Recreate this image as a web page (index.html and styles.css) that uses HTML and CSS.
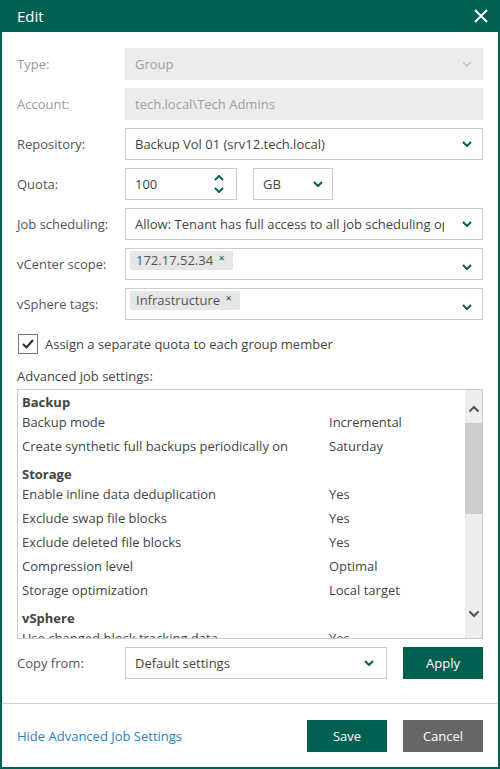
FILE: index.html
```html
<!DOCTYPE html>
<html lang="en">
<head>
  <meta charset="UTF-8">
  <title>Edit</title>
  <link rel="stylesheet" href="styles.css">
</head>
<body>

<div class="dialog">
  <header class="dlg-head">
    <h1>Edit</h1>
    <span class="close">
      <svg width="14" height="14" viewBox="0 0 14 14"><path d="M1 1L13 13M13 1L1 13" stroke="#fff" stroke-width="2"/></svg>
    </span>
  </header>

  <div class="dlg-body">
    <div class="row">
      <span class="label disabled">Type:</span>
      <div class="field off">
        <span class="val">Group</span>
        <svg class="chev" width="10" height="6" viewBox="0 0 10 6"><path d="M1 1L5 5L9 1" stroke="#c4c4c4" stroke-width="1.6" fill="none"/></svg>
      </div>
    </div>
    <div class="row">
      <span class="label disabled">Account:</span>
      <div class="field off"><span class="val">tech.local\Tech Admins</span></div>
    </div>
    <div class="row">
      <span class="label">Repository:</span>
      <div class="field">
        <span class="val">Backup Vol 01 (srv12.tech.local)</span>
        <svg class="chev" width="10" height="6" viewBox="0 0 10 6"><path d="M1 1L5 5L9 1" stroke="#006150" stroke-width="2" fill="none"/></svg>
      </div>
    </div>
    <div class="row">
      <span class="label">Quota:</span>
      <div class="field quota">
        <span class="val">100</span>
        <span class="spin">
          <svg width="10" height="6" viewBox="0 0 10 6"><path d="M1 5L5 1L9 5" stroke="#006150" stroke-width="2" fill="none"/></svg>
          <svg width="10" height="6" viewBox="0 0 10 6"><path d="M1 1L5 5L9 1" stroke="#006150" stroke-width="2" fill="none"/></svg>
        </span>
      </div>
      <div class="field unit">
        <span class="val">GB</span>
        <svg class="chev" width="10" height="6" viewBox="0 0 10 6"><path d="M1 1L5 5L9 1" stroke="#006150" stroke-width="2" fill="none"/></svg>
      </div>
    </div>
    <div class="row">
      <span class="label">Job scheduling:</span>
      <div class="field">
        <span class="val clip">Allow: Tenant has full access to all job scheduling options</span>
        <svg class="chev" width="10" height="6" viewBox="0 0 10 6"><path d="M1 1L5 5L9 1" stroke="#006150" stroke-width="2" fill="none"/></svg>
      </div>
    </div>
    <div class="row">
      <span class="label">vCenter scope:</span>
      <div class="field tags">
        <span class="tag">172.17.52.34 <b>&times;</b></span>
        <svg class="chev" width="10" height="6" viewBox="0 0 10 6"><path d="M1 1L5 5L9 1" stroke="#006150" stroke-width="2" fill="none"/></svg>
      </div>
    </div>
    <div class="row">
      <span class="label">vSphere tags:</span>
      <div class="field tags">
        <span class="tag">Infrastructure <b>&times;</b></span>
        <svg class="chev" width="10" height="6" viewBox="0 0 10 6"><path d="M1 1L5 5L9 1" stroke="#006150" stroke-width="2" fill="none"/></svg>
      </div>
    </div>

    <label class="check">
      <span class="box">
        <svg width="14" height="12" viewBox="0 0 14 12"><path d="M2 6L5.5 9.5L12 2" stroke="#333" stroke-width="2.2" fill="none"/></svg>
      </span>
      Assign a separate quota to each group member
    </label>

    <div class="adv-title">Advanced job settings:</div>

    <div class="adv">
      <div class="adv-list">
        <div class="grp">Backup</div>
        <div class="item"><span>Backup mode</span><span>Incremental</span></div>
        <div class="item"><span>Create synthetic full backups periodically on</span><span>Saturday</span></div>
        <div class="grp">Storage</div>
        <div class="item"><span>Enable inline data deduplication</span><span>Yes</span></div>
        <div class="item"><span>Exclude swap file blocks</span><span>Yes</span></div>
        <div class="item"><span>Exclude deleted file blocks</span><span>Yes</span></div>
        <div class="item"><span>Compression level</span><span>Optimal</span></div>
        <div class="item"><span>Storage optimization</span><span>Local target</span></div>
        <div class="grp">vSphere</div>
        <div class="item"><span>Use changed block tracking data</span><span>Yes</span></div>
      </div>
      <div class="scrollbar">
        <svg width="12" height="8" viewBox="0 0 12 8"><path d="M1.5 6.5L6 2L10.5 6.5" stroke="#555" stroke-width="2.2" fill="none"/></svg>
        <div class="track"><div class="thumb"></div></div>
        <svg width="12" height="8" viewBox="0 0 12 8"><path d="M1.5 1.5L6 6L10.5 1.5" stroke="#555" stroke-width="2.2" fill="none"/></svg>
      </div>
    </div>

    <div class="row copy">
      <span class="label">Copy from:</span>
      <div class="field copy-sel">
        <span class="val">Default settings</span>
        <svg class="chev" width="10" height="6" viewBox="0 0 10 6"><path d="M1 1L5 5L9 1" stroke="#006150" stroke-width="2" fill="none"/></svg>
      </div>
      <button class="btn green">Apply</button>
    </div>
  </div>

  <footer class="dlg-foot">
    <a href="#" class="link">Hide Advanced Job Settings</a>
    <div class="actions">
      <button class="btn green">Save</button>
      <button class="btn gray">Cancel</button>
    </div>
  </footer>
</div>

</body>
</html>
```

FILE: styles.css
```css
* {
  margin: 0;
  padding: 0;
  box-sizing: border-box;
}

body {
  font-family: 'Open Sans', 'Noto Sans', sans-serif;
  font-size: 13px;
  color: #444;
  background: #fff;
}

.dialog {
  width: 500px;
  height: 769px;
  border: 2px solid #006150;
  border-top: none;
  display: flex;
  flex-direction: column;
}

.dlg-head {
  height: 32px;
  flex-shrink: 0;
  background-color: #006150;
  color: #fff;
  display: flex;
  justify-content: space-between;
  align-items: center;
  padding: 0 12px 0 17px;
  margin: 0 -2px;
}

.dlg-head h1 {
  font-size: 15px;
  font-weight: 400;
}

.close {
  display: flex;
}

.dlg-body {
  flex-shrink: 0;
  padding: 16px 15px 24px;
  border-bottom: 1px solid #d0d0d0;
}

.row {
  display: flex;
  align-items: center;
  height: 32px;
  margin-bottom: 8px;
}

.label {
  width: 108px;
  flex-shrink: 0;
  color: #555;
}

.label.disabled {
  color: #999;
}

.field {
  flex: 1;
  height: 32px;
  border: 1px solid #ccc;
  display: flex;
  align-items: center;
  padding: 0 10px 0 9px;
  background: #fff;
  overflow: hidden;
}

.field .val {
  flex: 1;
  white-space: nowrap;
  overflow: hidden;
}

.field .val.clip {
  margin-right: 18px;
}

.field.off {
  background: #ececec;
  border-color: #ececec;
  color: #a0a0a0;
}

.chev {
  flex-shrink: 0;
}

.field.quota {
  flex: 0 0 112px;
}

.spin {
  display: flex;
  flex-direction: column;
  gap: 6px;
  margin-right: 2px;
}

.field.unit {
  flex: 0 0 80px;
  margin-left: 16px;
  padding-right: 9px;
}

.field.tags {
  align-items: flex-start;
  padding-top: 2px;
  padding-left: 4px;
}

.field.tags .chev {
  margin-left: auto;
  margin-top: 13px;
}

.tag {
  background: #e6e6e6;
  border-radius: 2px;
  padding: 0 8px 0 6px;
  height: 19px;
  line-height: 19px;
  color: #555;
}

.tag b {
  color: #006150;
  font-weight: 400;
  font-size: 11px;
  margin-left: 2px;
  position: relative;
  top: -3px;
}

.check {
  display: flex;
  align-items: center;
  gap: 7px;
  margin-top: 14px;
  height: 20px;
  color: #444;
}

.check .box {
  width: 20px;
  height: 20px;
  border: 1px solid #777;
  display: flex;
  align-items: center;
  justify-content: center;
  margin-left: 1px;
}

.adv-title {
  margin-top: 12px;
  height: 20px;
  line-height: 20px;
  color: #444;
}

.adv {
  margin-top: 3px;
  height: 250px;
  border: 1px solid #ccc;
  display: flex;
  overflow: hidden;
}

.adv-list {
  flex: 1;
  padding: 4px 0 0 4px;
  overflow: hidden;
}

.grp {
  font-weight: 700;
  height: 16px;
  line-height: 16px;
  margin-top: 8px;
  color: #444;
}

.grp:first-child {
  margin-top: 0;
}

.item {
  display: flex;
  height: 24px;
  line-height: 24px;
  white-space: nowrap;
}

.item span:first-child {
  width: 307px;
}

.scrollbar {
  width: 17px;
  flex-shrink: 0;
  background: #eee;
  display: flex;
  flex-direction: column;
  align-items: center;
}

.scrollbar svg {
  margin: 15px 0 10px;
}

.scrollbar svg:last-child {
  margin: 8px 0 20px;
}

.track {
  flex: 1;
  width: 100%;
}

.thumb {
  width: 100%;
  height: 91px;
  background: #cdcdcd;
}

.row.copy {
  margin-top: 8px;
  margin-bottom: 0;
}

.field.copy-sel {
  flex: 0 0 262px;
  padding-right: 12px;
}

.btn {
  height: 32px;
  width: 80px;
  border: none;
  color: #fff;
  font-family: inherit;
  font-size: 13px;
  cursor: pointer;
}

.row.copy .btn {
  margin-left: auto;
}

.btn.green {
  background-color: #006150;
}

.btn.gray {
  background-color: #666;
}

.dlg-foot {
  flex: 1;
  display: flex;
  justify-content: space-between;
  align-items: center;
  padding: 0 15px;
}

.link {
  color: #1d86c6;
  text-decoration: none;
}

.actions {
  display: flex;
  gap: 16px;
}
```
